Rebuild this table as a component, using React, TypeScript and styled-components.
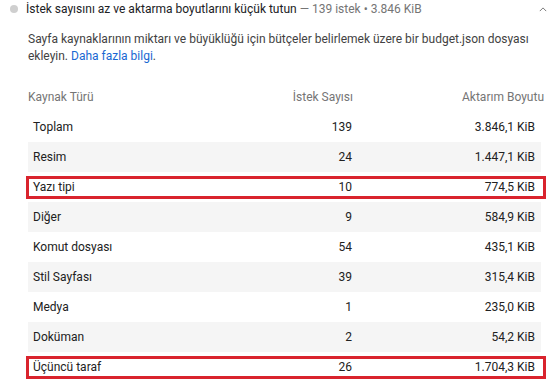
import styled, { createGlobalStyle } from "styled-components"

const Global = createGlobalStyle`
body{
  margin:0;
  background:#fff;
  font-family: Roboto, "Noto Sans", Arial, sans-serif;
  color:#212121;
}
`

const rows = [
  { type: "Toplam", count: "139", size: "3.846,1 KiB" },
  { type: "Resim", count: "24", size: "1.447,1 KiB" },
  { type: "Yazı tipi", count: "10", size: "774,5 KiB", mark: true },
  { type: "Diğer", count: "9", size: "584,9 KiB" },
  { type: "Komut dosyası", count: "54", size: "435,1 KiB" },
  { type: "Stil Sayfası", count: "39", size: "315,4 KiB" },
  { type: "Medya", count: "1", size: "235,0 KiB" },
  { type: "Doküman", count: "2", size: "54,2 KiB" },
  { type: "Üçüncü taraf", count: "26", size: "1.704,3 KiB", mark: true },
]

const App = () => {
  return (
    <Page>
      <Global />
      <Header>
        <Dot />
        <Title>
          İstek sayısını az ve aktarma boyutlarını küçük tutun
          <Summary> — 139 istek • 3.846 KiB</Summary>
        </Title>
        <Chevron viewBox="0 0 10 6">
          <path d="M1 5 L5 1 L9 5" fill="none" stroke="#757575" strokeWidth="1.2" />
        </Chevron>
      </Header>
      <Desc>
        Sayfa kaynaklarının miktarı ve büyüklüğü için bütçeler belirlemek üzere bir budget.json dosyası
        ekleyin. <Link>Daha fazla bilgi</Link>.
      </Desc>
      <Table>
        <HeadRow>
          <HeadCell>Kaynak Türü</HeadCell>
          <HeadCell $right>İstek Sayısı</HeadCell>
          <HeadCell $right>Aktarım Boyutu</HeadCell>
        </HeadRow>
        {rows.map((r, i) => (
          <Row key={r.type} $odd={i % 2 === 1} $mark={!!r.mark}>
            <Cell>{r.type}</Cell>
            <Cell $right>{r.count}</Cell>
            <Cell $right>{r.size}</Cell>
          </Row>
        ))}
      </Table>
    </Page>
  )
}

export default App

const Page = styled.div`
width:556px;
height:385px;
overflow:hidden;
`
const Header = styled.div`
display:flex;
align-items:center;
height:18px;
padding:0 9px 0 10px;
`
const Dot = styled.div`
width:8px;
height:8px;
border-radius:50%;
background:#cfcfcf;
margin-right:8px;
flex-shrink:0;
`
const Title = styled.div`
flex:1;
font-size:12px;
color:#202124;
white-space:nowrap;
`
const Summary = styled.span`
color:#757575;
`
const Chevron = styled.svg`
width:8px;
height:5px;
`
const Desc = styled.div`
margin:13px 14px 0 28px;
font-size:12px;
line-height:17px;
color:#424242;
`
const Link = styled.span`
color:#1967d2;
`
const Table = styled.div`
margin:17px 15px 0 28px;
display:flex;
flex-direction:column;
`
const HeadRow = styled.div`
display:grid;
grid-template-columns: 1fr 150px 191px;
height:30px;
align-items:center;
margin-right:-3px;
`
const HeadCell = styled.div<{ $right?: boolean }>`
font-size:12px;
color:#757575;
text-align:${p => (p.$right ? "right" : "left")};
`
const Row = styled.div<{ $odd: boolean; $mark: boolean }>`
position:relative;
display:grid;
grid-template-columns: 1fr 150px 183px;
height:30px;
align-items:center;
padding:0 6px 0 5px;
background:${p => (p.$odd ? "#f5f5f5" : "#fff")};
&::after{
  content:"";
  display:${p => (p.$mark ? "block" : "none")};
  position:absolute;
  left:-2px;
  right:-5px;
  top:4px;
  bottom:3px;
  border:3px solid #d9232d;
}
`
const Cell = styled.div<{ $right?: boolean }>`
font-size:12px;
color:#212121;
text-align:${p => (p.$right ? "right" : "left")};
`
